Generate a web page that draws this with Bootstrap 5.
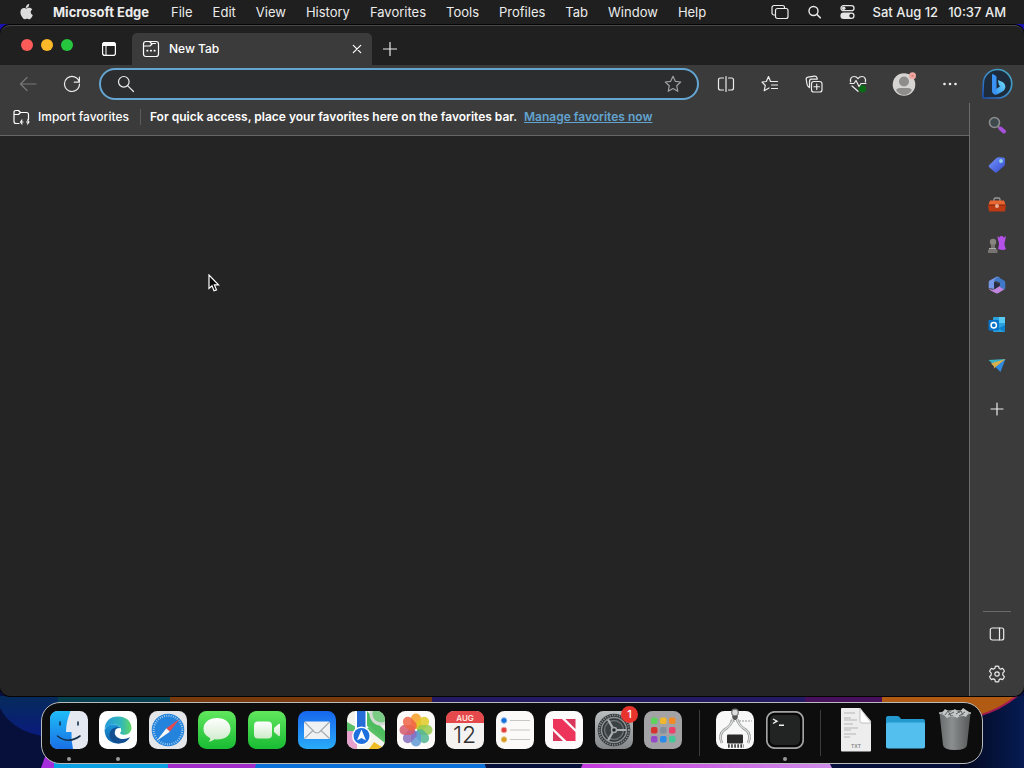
<!DOCTYPE html>
<html lang="en">
<head>
<meta charset="utf-8">
<meta name="viewport" content="width=device-width, initial-scale=1">
<title>New Tab</title>
<link href="https://cdn.jsdelivr.net/npm/bootstrap@5.3.0/dist/css/bootstrap.min.css" rel="stylesheet">
<style>
  body { font-family: Inter, "Liberation Sans", sans-serif; font-size: 13px; line-height: 16px; background: linear-gradient(#1c12b0, #07103a); color: #ececec; }
  a { color: inherit; }
  svg { display: block; flex: none; }
  .line { fill: none; stroke: currentColor; stroke-width: 1.2; stroke-linecap: round; stroke-linejoin: round; }
  .bare { background: none; border: 0; padding: 0; color: inherit; display: flex; align-items: center; justify-content: center; flex: none; }

  .menubar { height: 24px; background: #1f1f1f; padding: 0 18px 0 20px; font-weight: 500; }
  .menubar .menus { gap: 20px; padding: 0 0 1px 20px; }
  .menubar .app-name { font-weight: 700; margin-right: 2px; }
  .status { gap: 18px; }
  .clock { gap: 10px; }

  .browser { position: relative; z-index: 1; margin-top: 1px; border-radius: 10px; background: #202020; border-top: 1px solid #484848; box-shadow: 0 0 0 1px #050505; }
  .tabstrip { height: 39px; }
  .lights { gap: 8px; padding: 0 0 0 21px; margin-bottom: 1px; }
  .light { width: 12px; height: 12px; border-radius: 50%; }
  .red { background: #fc5b57; } .amber { background: #fdb927; } .green { background: #27c63f; }
  .tab-actions { width: 46px; margin-left: 13px; height: 33px; }
  .page-tab { width: 240px; height: 32px; background: #3b3b3b; border-radius: 5px 5px 0 0; padding: 0 9px 0 10px; gap: 9px; font-size: 12px; font-weight: 500; color: #fff; }
  .new-tab { width: 36px; height: 32px; }

  .toolbar { height: 38px; background: #3b3b3b; padding: 0 2px 0 6px; }
  .tool { width: 44px; height: 32px; }
  .tool-back { color: #787878; }
  .tool-star { color: #a0a0a0; }
  .tool-profile { width: 48px; }
  .tool-chat { width: 50px; }
  .address { height: 32px; margin: 0 5px; border: 2px solid #65a5d1; border-radius: 16px; background: #2b2d2f; padding: 0 15px 0 16px; }
  .address input { background: none; border: 0; outline: 0; color: #fff; min-width: 0; padding: 0 10px; }

  .favbar { height: 33px; background: #3b3b3b; border-bottom: 1px solid #666; padding: 0 13px 4px; font-size: 12px; color: #fff; }
  .favbar .rule { width: 1px; height: 16px; background: #5c5c5c; margin: 0 9px 0 11px; }
  .favbar a { color: #62a3cf; font-weight: 600; }
  .notice { font-weight: 600; }
  .page { background: #242424; border-radius: 0 0 0 10px; }
  .sidebar { width: 55px; background: #3b3b3b; border-left: 1px solid #6c6c6c; padding: 2px 0; border-radius: 0 0 10px 0; }
  .side { width: 40px; height: 40px; }
  .side-rule { width: 28px; height: 1px; background: #6a6a6a; margin-bottom: 2px; }
  .pointer { position: absolute; z-index: 2; left: 208px; top: 274px; }

  .desk { height: 72px; position: relative; padding-top: 6px; background: #06143c; }
  .wallpaper { position: absolute; inset: 0; width: 100%; height: 100%; }
  .dock { position: relative; z-index: 2; width: 92%; height: 62px; border: 1px solid #b9bcbc; border-radius: 19px; background: #0d0d0d; padding: 0 2px; }
  .dock-app { flex: 1 1 0; padding: 8px 0 0; position: relative; }
  .running::after { content: ""; position: absolute; left: 50%; top: 54px; width: 4px; height: 4px; margin-left: -2px; border-radius: 50%; background: #9a9a9a; }
  .dock-rule { width: 22px; }
  .dock-rule i { display: block; width: 1px; height: 46px; margin: 7px auto; background: #3c3c3c; }
  .count { position: absolute; left: 50%; top: 3px; margin-left: 7px; width: 17px; height: 17px; line-height: 17px; border-radius: 50%; background: #e8342d; color: #fff; font-size: 11px; font-weight: 500; }
</style>
</head>
<body class="vh-100 d-flex flex-column overflow-hidden">

<header class="menubar d-flex align-items-center flex-shrink-0">
  <svg width="13" height="16" viewBox="0 0 13 16" fill="#ddd"><path d="M9.200 0c.1 1.200-.4 2.200-1 2.900-.6.700-1.500 1.200-2.400 1.100-.1-1.100.4-2.100 1-2.800C7.400.5 8.400 0 9.200 0zM12.300 5.400c-1 .6-1.600 1.500-1.600 2.700 0 1.400.8 2.500 2.100 3-.3 1-.8 1.900-1.400 2.700-.6.800-1.200 1.500-2.100 1.500-.9 0-1.200-.5-2.300-.5s-1.500.5-2.300.5c-.9 0-1.600-.8-2.200-1.700C1.200 11.900.4 10.100.4 8.300c0-2.900 1.800-4.400 3.600-4.400 1 0 1.800.6 2.500.6.600 0 1.600-.7 2.800-.7 1.200 0 2.300.6 3 1.600z"/></svg>
  <nav class="menus d-flex text-nowrap" aria-label="Menu bar">
    <button class="bare app-name">Microsoft Edge</button>
    <button class="bare">File</button><button class="bare">Edit</button><button class="bare">View</button>
    <button class="bare">History</button><button class="bare">Favorites</button><button class="bare">Tools</button>
    <button class="bare">Profiles</button><button class="bare">Tab</button><button class="bare">Window</button><button class="bare">Help</button>
  </nav>
  <div class="status d-flex align-items-center ms-auto text-nowrap">
    <svg class="line" width="18" height="16" viewBox="0 0 18 16"><path d="M3.500 11H3A2 2 0 0 1 1 9V3.500A2 2 0 0 1 3 1.500H11.500A2 2 0 0 1 13.500 3.500"/><rect x="4.500" y="4.500" width="12.500" height="10" rx="2"/></svg>
    <svg class="line" width="15" height="16" viewBox="0 0 15 16"><circle cx="6.500" cy="7" r="4.500" stroke-width="1.400"/><path d="M10 10.500L13.300 13.800" stroke-width="1.600"/></svg>
    <svg width="15" height="16" viewBox="0 0 15 16"><rect x="1" y="1.700" width="13" height="5" rx="2.500" fill="none" stroke="#e4e4e4" stroke-width="1.300"/><circle cx="3.700" cy="4.200" r="1.800" fill="#e4e4e4"/><rect x=".4" y="8.500" width="14.200" height="6.400" rx="3.200" fill="#e4e4e4"/><circle cx="11.300" cy="11.700" r="2" fill="#1f1f1f"/></svg>
    <div class="clock d-flex pb-1 pt-1"><span>Sat Aug 12</span><time>10:37 AM</time></div>
  </div>
</header>

<section class="browser flex-fill d-flex flex-column">
  <div class="tabstrip d-flex align-items-center flex-shrink-0">
    <div class="lights d-flex">
      <button class="bare light red" aria-label="Close window"></button><button class="bare light amber" aria-label="Minimize"></button><button class="bare light green" aria-label="Zoom"></button>
    </div>
    <button class="bare tab-actions align-self-end" aria-label="Tab actions">
      <svg width="14" height="14" viewBox="0 0 14 14"><rect x=".6" y=".6" width="12.800" height="12.800" rx="2.200" fill="none" stroke="#fff" stroke-width="1.200"/><path d="M.6 3.500V2.500Q.6.6 2.500.6H11.500Q13.400.6 13.400 2.500V3.500H.6zM4 4V13.400" fill="#fff" stroke="#fff"/></svg>
    </button>
    <div class="page-tab d-flex align-items-center align-self-end flex-shrink-1">
      <svg class="line" width="18" height="18" viewBox="0 0 18 18"><path d="M1.500 6V4Q1.500 1.500 4 1.500H7.500L9.500 3.500H13.500M8.500 1.500H14Q16.500 1.500 16.500 4V14Q16.500 16.500 14 16.500H4Q1.500 16.500 1.500 14V6H8L10 4"/><path d="M5.200 10.700h.4M8.800 10.700h.4M12.400 10.700h.4" stroke-width="1.700"/></svg>
      <span class="flex-fill text-truncate">New Tab</span>
      <button class="bare" aria-label="Close tab"><svg class="line" width="12" height="12" viewBox="0 0 12 12"><path d="M2.300 2.300L9.700 9.700M9.700 2.300L2.300 9.700"/></svg></button>
    </div>
    <button class="bare new-tab align-self-end" aria-label="New tab"><svg class="line" width="14" height="14" viewBox="0 0 14 14"><path d="M7 .5V13.500M.5 7H13.500"/></svg></button>
  </div>

  <div class="toolbar d-flex align-items-center flex-shrink-0">
    <button class="bare tool tool-back" aria-label="Back"><svg class="line" width="18" height="16" viewBox="0 0 18 16"><path d="M17 8H1.500M8 1.500L1.500 8L8 14.500"/></svg></button>
    <button class="bare tool" aria-label="Reload"><svg class="line" width="18" height="18" viewBox="0 0 18 18"><path d="M16.300 7.200A7.500 7.500 0 1 0 16.500 9M16.400 2V7.200H11.300"/></svg></button>
    <div class="address d-flex align-items-center flex-fill">
      <svg class="line" width="18" height="18" viewBox="0 0 18 18"><circle cx="6.800" cy="6.800" r="5.300"/><path d="M10.800 10.800L16.500 16.500"/></svg>
      <input class="flex-fill" type="text" aria-label="Address and search bar">
      <button class="bare tool-star" aria-label="Add to favorites"><svg class="line" width="18" height="18" viewBox="0 0 18 18"><path d="M9 1.300L11.300 6.300L16.700 7L12.700 10.700L13.800 16.300L9 13.600L4.200 16.300L5.300 10.700L1.300 7L6.700 6.300Z"/></svg></button>
    </div>
    <button class="bare tool" aria-label="Split screen"><svg class="line" width="18" height="18" viewBox="0 0 18 18"><path d="M9 1.500V16.500M6.500 3H3.500Q1.500 3 1.500 5V13Q1.500 15 3.500 15H6.500M11.500 3H14.500Q16.500 3 16.500 5V13Q16.500 15 14.500 15H11.500"/></svg></button>
    <button class="bare tool" aria-label="Favorites"><svg class="line" width="18" height="18" viewBox="0 0 18 18"><path d="M10.700 6.500H9.500L7.500 1.500L5.300 6.500L1 7L4.300 10.500L3.200 15.700L8 13M11 6.500H16.500M10.500 10H16.500M10.500 13.500H16.500"/></svg></button>
    <button class="bare tool" aria-label="Collections"><svg class="line" width="18" height="18" viewBox="0 0 18 18"><rect x="6.500" y="6.500" width="10.500" height="10.500" rx="2.300"/><path d="M11.750 9V14.500M9 11.750H14.500M4.500 12.500L3 11.200Q2.300 10.500 2.100 9.500L1.200 4.500Q.9 2.500 3 2.100L9.500 1.100Q11.500.9 12 2.800L12.300 4M4.500 12.500V6.500Q4.500 4.200 6.300 4.200H12.300"/></svg></button>
    <button class="bare tool" aria-label="Browser essentials"><svg class="line" width="18" height="18" viewBox="0 0 18 18"><circle cx="13.500" cy="13.800" r="3.800" fill="#0b6a15" stroke="none"/><path d="M1.700 7C.7 3.500 2.800 1.500 5 1.500C6.800 1.500 8.200 2.500 9 3.700C9.800 2.500 11.200 1.500 13 1.500C15.500 1.500 17.300 3.900 16.300 7M1 8.500H5L7 5.500L10 11.500L12 8.500H17M3 11L9 16.300"/></svg></button>
    <button class="bare tool tool-profile" aria-label="Profile"><svg width="24" height="24" viewBox="0 0 24 24"><circle cx="12" cy="12.500" r="11.300" fill="#d5d4d2"/><circle cx="12" cy="9.500" r="5" fill="#8f8d8b"/><path d="M4 18Q5 16 8 16H16Q19 16 20 18Q17 23 12 23T4 18Z" fill="#8f8d8b"/><circle cx="20.500" cy="3.800" r="3.500" fill="#efa8a2"/><circle cx="20.500" cy="3.800" r="1.300" fill="#d98782"/></svg></button>
    <button class="bare tool" aria-label="Settings and more"><svg width="14" height="4" viewBox="0 0 14 4" fill="#eee"><circle cx="1.500" cy="2" r="1.300"/><circle cx="7" cy="2" r="1.300"/><circle cx="12.500" cy="2" r="1.300"/></svg></button>
    <button class="bare tool tool-chat" aria-label="Bing Chat"><svg width="32" height="32" viewBox="0 0 32 32"><defs><linearGradient id="ring" x1="1" y1="0" x2="0" y2="1"><stop stop-color="#43a9c4"/><stop offset=".5" stop-color="#3d8fc8"/><stop offset="1" stop-color="#1b4fb8"/></linearGradient><linearGradient id="bing" x1="0" y1="1" x2="1" y2="0"><stop stop-color="#2d86f2"/><stop offset="1" stop-color="#6fe0f7"/></linearGradient></defs><path d="M16.500 1.500A14.200 14.200 0 1 1 16.500 30H3Q1.700 30 1.800 29L2.300 16A14.200 14.200 0 0 1 16.500 1.500Z" fill="#1e2b3a" stroke="url(#ring)" stroke-width="1.600"/><path d="M17 12.500Q16.500 11.800 17.500 12.200L21 13.800Q24.700 15.800 24.300 19.500Q24 22 21.500 23.500L16.500 26.300Q14 27.300 12.300 25.800Q11 24.500 11 22.500L15.500 20.800L19.200 18.300Q18.200 17.800 17.800 16.500Z" fill="url(#bing)"/><path d="M11 6.500Q11 5.800 11.800 6.100L14.700 7.700Q15.500 8.200 15.500 9.200V22Q15.500 25 13.800 25.500Q11 25 11 22.500Z" fill="#3a93f3"/></svg></button>
  </div>

  <div class="d-flex flex-fill">
    <main class="flex-fill d-flex flex-column">
      <div class="favbar d-flex align-items-center text-nowrap">
        <button class="bare fw-medium"><svg class="line me-2" width="17" height="17" viewBox="0 0 17 17"><path d="M6 14.500H3Q1 14.500 1 12.500V3.500Q1 1.500 3 1.500H5.500L7.500 3.500H13.500Q15.500 3.500 15.500 5.500V10.500M1 5.500H5.500L7.500 3.500M9 11L7.500 13L9 15M14.500 11L16 13L14.500 15M7.800 13H10M13.500 13H15.800"/></svg>Import favorites</button>
        <span class="rule"></span>
        <span class="notice">For quick access, place your favorites here on the favorites bar. <a class="ms-1" href="#">Manage favorites now</a></span>
      </div>
      <div class="page flex-fill"></div>
    </main>
    <aside class="sidebar d-flex flex-column align-items-center" aria-label="Sidebar">
      <button class="bare side" aria-label="Search"><svg width="18" height="18" viewBox="0 0 18 18"><circle cx="6.500" cy="6.500" r="5" fill="#3e494e" stroke="#8c8c8c" stroke-width="1.600"/><path d="M10 10.500L12.500 12.500" stroke="#888" stroke-width="2"/><path d="M12.500 12.500L16 15.500" stroke="#a851dc" stroke-width="4" stroke-linecap="round"/></svg></button>
      <button class="bare side" aria-label="Shopping"><svg width="18" height="18" viewBox="0 0 18 18"><defs><linearGradient id="tag" x2="1" y2="1"><stop stop-color="#7597ff"/><stop offset="1" stop-color="#3449cc"/></linearGradient></defs><path d="M1 9.200L8.500 2Q9.300 1.200 10.500 1.200L15.800 1.500Q17 1.700 17 3V7.800Q17 9 16 10L9 16.300Q7.800 17.200 6.700 16L1.200 11.200Q.2 10.200 1 9.200Z" fill="url(#tag)"/><circle cx="13" cy="5" r="1.900" fill="#93d2e6"/></svg></button>
      <button class="bare side" aria-label="Tools"><svg width="18" height="18" viewBox="0 0 18 18"><path d="M6 5V3.500Q6 2 7.500 2H10.500Q12 2 12 3.500V5" fill="none" stroke="#999" stroke-width="1.300"/><path d="M2 4.500H16L18 10H0Z" fill="#e76632"/><path d="M0 9H18L17 15.500H1Z" fill="#bd3b12"/><rect x="0" y="8.500" width="18" height="1" fill="#7e2308"/><circle cx="9" cy="10" r="2" fill="#e6ac93"/></svg></button>
      <button class="bare side" aria-label="Games"><svg width="18" height="18" viewBox="0 0 18 18"><path d="M9.500 0L11.500 1.500L12.500 0H14.500L15.500 1.500L18 0L17 5Q15.500 8 18 13Q16 15 10 13Q12 7 10 4Z" fill="#b451e8"/><circle cx="5" cy="6" r="3.200" fill="#888580"/><path d="M3 8.500H7V12L9.500 14V17H0V14L3 12Z" fill="#777370"/><path d="M1 12.500H8" stroke="#aaa"/></svg></button>
      <button class="bare side" aria-label="Microsoft 365"><svg width="18" height="18" viewBox="0 0 18 18"><path d="M9 .5L1.700 4.500Q.7 5.200.7 6.500V12L6 13V6L12 2Q10.500.2 9 .5Z" fill="#7697e4"/><path d="M.7 12Q1 13.500 3 14.700L8 17.300Q9 17.800 10.500 17L16.500 13.300L12 10L6.500 13.300Q3 14.500.7 12Z" fill="#c285df"/><path d="M10 1L16 4.500Q17.300 5.300 17.300 7V12Q17.300 13 16 13.500L12 11V6.800L6 4.500Q8 1 10 1Z" fill="#3f78c6"/><path d="M6 6L12 9L6.500 13Z" fill="#242c48"/></svg></button>
      <button class="bare side" aria-label="Outlook"><svg width="18" height="18" viewBox="0 0 18 18"><rect x="5" y="1" width="12" height="15" rx="1" fill="#2ba2de"/><path d="M11 1H17V7H11Z" fill="#58cbf5"/><path d="M5 10L17 16V9L11 12Z" fill="#0e81ca"/><rect x=".5" y="4" width="10.500" height="10.500" rx="1" fill="#0874c9"/><circle cx="5.750" cy="9.200" r="2.700" fill="none" stroke="#fff" stroke-width="1.500"/></svg></button>
      <button class="bare side" aria-label="Drop"><svg width="18" height="18" viewBox="0 0 18 18"><path d="M.5 4L17.500 3L7 10Z" fill="#3bb2c5"/><path d="M17.500 3L12.500 16L6.500 10Z" fill="#3089dd"/><path d="M17.500 3L3 7.500L6 10.500V12.500L8.500 10.300Z" fill="#d9b04a"/></svg></button>
      <button class="bare side mt-1" aria-label="Customize"><svg class="line" width="14" height="14" viewBox="0 0 14 14"><path d="M7 1V13M1 7H13"/></svg></button>
      <span class="side-rule mt-auto"></span>
      <button class="bare side" aria-label="Hide sidebar"><svg class="line" width="16" height="14" viewBox="0 0 16 14"><rect x="1.300" y="1" width="13.400" height="12" rx="2"/><path d="M10.500 1.200V12.800"/></svg></button>
      <button class="bare side" aria-label="Settings"><svg class="line" width="18" height="18" viewBox="0 0 18 18"><circle cx="9" cy="9" r="2.200"/><path d="M7.300 1.300Q9 .8 10.700 1.300L11.100 3.300Q11.800 3.900 12.700 4.100L14.600 3.400Q15.900 4.700 16.400 6.400L14.900 7.900Q14.600 9 14.900 10.100L16.400 11.600Q15.900 13.300 14.600 14.600L12.700 13.900Q11.800 14.100 11.100 14.700L10.700 16.700Q9 17.200 7.300 16.700L6.900 14.700Q6.200 14.100 5.300 13.900L3.400 14.600Q2.100 13.300 1.600 11.600L3.100 10.100Q3.400 9 3.100 7.900L1.600 6.400Q2.100 4.700 3.400 3.400L5.300 4.100Q6.200 3.900 6.900 3.300Z"/></svg></button>
    </aside>
  </div>
</section>

<footer class="desk flex-shrink-0">
  <svg class="wallpaper" viewBox="0 0 1024 72" preserveAspectRatio="none">
    <defs><linearGradient id="glow" x2="0" y2="1"><stop stop-color="#062b5b"/><stop offset="1" stop-color="#0a1a80"/></linearGradient><linearGradient id="pink"><stop stop-color="#c43ade"/><stop offset="1" stop-color="#cf8de8"/></linearGradient><linearGradient id="night"><stop stop-color="#03081e"/><stop offset="1" stop-color="#061b52"/></linearGradient></defs>
    <rect width="1024" height="72" fill="#07103a"/>
    <path d="M0 0H60V42Q14 40 0 12Z" fill="url(#glow)"/>
    <path d="M58 0H170V20H58Z" fill="#07414f"/><path d="M170 0H432V20H170Z" fill="#793a0d"/><path d="M432 0H805V20H432Z" fill="#231a63"/><path d="M805 0H882V20H805Z" fill="#47105c"/>
    <path d="M960 0H1024V72H960Z" fill="url(#night)"/><path d="M882 0H1017Q1000 14 978 20H882Z" fill="#b05a13"/><path d="M1017 0Q1000 14 978 20" fill="none" stroke="#a21b55" stroke-width="2"/>
    <path d="M41 72L46 58H60V72Z" fill="#a62ddc"/><path d="M54 60H168V72H54Z" fill="#0aa0e2"/><path d="M168 60H258V72H168Z" fill="#a22bc9"/><path d="M258 60H482L486 72H255Z" fill="#0b71d8"/><path d="M586 60H826L832 72H581Z" fill="url(#pink)"/>
  </svg>
  <nav class="dock d-flex mx-auto" aria-label="Dock">
    <button class="bare dock-app align-items-start running" aria-label="Finder"><svg width="38" height="38" viewBox="0 0 38 38"><defs><linearGradient id="fin" x2="0" y2="1"><stop stop-color="#1fbdf7"/><stop offset="1" stop-color="#196fe5"/></linearGradient></defs><rect width="38" height="38" rx="8.500" fill="#e4e8f0"/><path d="M8.500 0H20.500Q16 11 16 21H21.500Q21 29 23 38H8.500Q0 38 0 29.500V8.500Q0 0 8.500 0Z" fill="url(#fin)"/><path d="M10 11V14M28 11V14M7.500 25Q18 33.500 30 25" fill="none" stroke="#16314c" stroke-width="1.600" stroke-linecap="round"/></svg></button>
    <button class="bare dock-app align-items-start running" aria-label="Microsoft Edge"><svg width="38" height="38" viewBox="0 0 38 38"><defs><linearGradient id="ed1"><stop stop-color="#2598dc"/><stop offset=".6" stop-color="#31b7bb"/><stop offset="1" stop-color="#61d764"/></linearGradient><linearGradient id="ed2" y2="1" x2="0"><stop stop-color="#1b98db"/><stop offset="1" stop-color="#1160a8"/></linearGradient></defs><rect width="38" height="38" rx="8.500" fill="#fff"/><path d="M5.500 18Q7 5.500 19 5.500Q32 6 32.500 17.500Q31.500 24 24.500 23.800Q20.500 23.500 21.300 21.500Q23 20 21.800 17.500Q19 12.500 12 13.500Q7.500 14.500 5.500 18Z" fill="url(#ed1)"/><path d="M5.500 19Q8 13 14 13.300Q19.500 13.500 21.500 17Q15 17 14.700 22Q15 31 26 29Q29 28 31 26.300Q27 32.500 19 32.500Q6.500 32 5.500 19Z" fill="url(#ed2)"/><path d="M14 17.500Q10 20 10.500 25.500Q12.500 31.500 19.500 32.500Q27 32.500 31 26.300Q26 29 20.500 27.500Q14 25 16.500 18.500Q17 17 21 16.600Q17 15.700 14 17.500Z" fill="#144f91"/></svg></button>
    <button class="bare dock-app align-items-start" aria-label="Safari"><svg width="38" height="38" viewBox="0 0 38 38"><rect width="38" height="38" rx="8.500" fill="#e5e6e9"/><circle cx="19" cy="19" r="16.300" fill="#2483dc"/><circle cx="19" cy="19" r="14.300" fill="none" stroke="#b8d8ef" stroke-width="2" stroke-dasharray=".8 1.450"/><path d="M30.500 8L17.300 17.200L20.800 20.800Z" fill="#e44a50"/><path d="M7.500 30L17.300 17.200L20.800 20.800Z" fill="#f6f7f8"/></svg></button>
    <button class="bare dock-app align-items-start" aria-label="Messages"><svg width="38" height="38" viewBox="0 0 38 38"><defs><linearGradient id="grn" x2="0" y2="1"><stop stop-color="#61e75e"/><stop offset="1" stop-color="#18bc33"/></linearGradient><linearGradient id="sil" x2="0" y2="1"><stop stop-color="#fff"/><stop offset="1" stop-color="#ceebca"/></linearGradient></defs><rect width="38" height="38" rx="8.500" fill="url(#grn)"/><path d="M19 7C27 7 32.500 11.500 32.500 18S27 28.500 19 28.500L16.500 28.300Q14 30.500 10.500 30.800Q12.500 29 12.300 27.200Q5.500 24 5.500 18C5.500 11.500 11 7 19 7Z" fill="url(#sil)"/></svg></button>
    <button class="bare dock-app align-items-start" aria-label="FaceTime"><svg width="38" height="38" viewBox="0 0 38 38"><rect width="38" height="38" rx="8.500" fill="url(#grn)"/><rect x="6" y="10.500" width="18" height="17" rx="4" fill="url(#sil)"/><path d="M26 17L30 13.500Q32 12 32 14V24Q32 26 30 24.500L26 21Z" fill="url(#sil)"/></svg></button>
    <button class="bare dock-app align-items-start" aria-label="Mail"><svg width="38" height="38" viewBox="0 0 38 38"><defs><linearGradient id="mai" x2="0" y2="1"><stop stop-color="#1767ee"/><stop offset="1" stop-color="#29abf8"/></linearGradient></defs><rect width="38" height="38" rx="8.500" fill="url(#mai)"/><rect x="6" y="10.500" width="26" height="17.500" rx="1.500" fill="#eff1f2"/><path d="M6.500 11L16.500 21Q19 23 21.500 21L31.500 11M6.500 27.500L15 19.500M31.500 27.500L23 19.500" fill="none" stroke="#a2abb2" stroke-width="1.100"/></svg></button>
    <button class="bare dock-app align-items-start" aria-label="Maps"><svg width="38" height="38" viewBox="0 0 38 38"><defs><clipPath id="rnd"><rect width="38" height="38" rx="8.500"/></clipPath></defs><g clip-path="url(#rnd)"><rect width="38" height="38" fill="#f3f4ed"/><path d="M20 0L38 20V31L17 12V0Z" fill="#4ebd60"/><path d="M0 11L9 16V25H0Z" fill="#58c066"/><circle cx="34" cy="3" r="10" fill="#7bcc84" stroke="#d4dad4" stroke-width="3"/><path d="M0 20H10V38H0Z" fill="#e7a1cd"/><path d="M22 38L27 31L38 38Z" fill="#efbd24"/><path d="M23 15L38 28V32L20 18Z" fill="#58c066"/><rect x="8" y="0" width="12" height="20" fill="#fff"/><rect x="10" width="8.500" height="20" fill="#266dd7"/><circle cx="14.500" cy="25" r="9.500" fill="#fff"/><circle cx="14.500" cy="25" r="8" fill="#1d70de"/><path d="M14.500 18.500L19 29.500L14.500 27L10 29.500Z" fill="#fff"/></g></svg></button>
    <button class="bare dock-app align-items-start" aria-label="Photos"><svg width="38" height="38" viewBox="0 0 38 38"><rect width="38" height="38" rx="8.500" fill="#fcfbf9"/><g fill-opacity=".85"><rect x="14" y="2.500" width="10" height="15.500" rx="5" fill="#f79e25"/><rect x="14" y="2.500" width="10" height="15.500" rx="5" fill="#e0c926" transform="rotate(45 19 19)"/><rect x="14" y="2.500" width="10" height="15.500" rx="5" fill="#96c94d" transform="rotate(90 19 19)"/><rect x="14" y="2.500" width="10" height="15.500" rx="5" fill="#52b694" transform="rotate(135 19 19)"/><rect x="14" y="2.500" width="10" height="15.500" rx="5" fill="#609ad5" transform="rotate(180 19 19)"/><rect x="14" y="2.500" width="10" height="15.500" rx="5" fill="#876fc0" transform="rotate(225 19 19)"/><rect x="14" y="2.500" width="10" height="15.500" rx="5" fill="#d4586f" transform="rotate(270 19 19)"/><rect x="14" y="2.500" width="10" height="15.500" rx="5" fill="#ee6445" transform="rotate(315 19 19)"/></g></svg></button>
    <button class="bare dock-app align-items-start" aria-label="Calendar"><svg width="38" height="38" viewBox="0 0 38 38" text-anchor="middle" font-family="Inter, sans-serif"><rect width="38" height="38" rx="8.500" fill="#f5f3f1"/><path d="M0 12V8.500Q0 0 8.500 0H29.500Q38 0 38 8.500V12Z" fill="#e6494b"/><text x="19" y="9.500" font-size="8" font-weight="600" fill="#ffe3df">AUG</text><text x="18.500" y="32" font-size="23" font-weight="300" fill="#303030">12</text></svg></button>
    <button class="bare dock-app align-items-start" aria-label="Reminders"><svg width="38" height="38" viewBox="0 0 38 38"><rect width="38" height="38" rx="8.500" fill="#fbfaf8"/><path d="M14 9.500H34M14 19H34M14 28.500H34" stroke="#c6c6c5"/><g stroke-width="1"><circle cx="8" cy="9.500" r="2.800" fill="#1570da" stroke="#84b3eb"/><circle cx="8" cy="19" r="2.800" fill="#e23e37" stroke="#efa29c"/><circle cx="8" cy="28.500" r="2.800" fill="#d99a1a" stroke="#e5cc8d"/></g></svg></button>
    <button class="bare dock-app align-items-start" aria-label="News"><svg width="38" height="38" viewBox="0 0 38 38"><rect width="38" height="38" rx="8.500" fill="#fcfafa"/><path d="M8 8H17L30.500 21V30H21.500L8 17Z" fill="#ed355b"/><path d="M20.500 8H30.500V18ZM8 20L18 30H8Z" fill="#d8365b"/></svg></button>
    <button class="bare dock-app align-items-start" aria-label="System Preferences, 1 update"><svg width="38" height="38" viewBox="0 0 38 38"><defs><linearGradient id="pre" x2="0" y2="1"><stop stop-color="#b9bdbe"/><stop offset="1" stop-color="#85898b"/></linearGradient></defs><rect width="38" height="38" rx="8.500" fill="url(#pre)"/><circle cx="19" cy="19" r="16.300" fill="#303538"/><circle cx="19" cy="19" r="14.800" fill="none" stroke="#8d9294" stroke-width="1.800" stroke-dasharray="1.200 1.200"/><circle cx="19" cy="19" r="12.500" fill="none" stroke="#8c9192" stroke-width="1.500"/><circle cx="19" cy="19" r="9.500" fill="#3b4143" stroke="#6a7072" stroke-width="1.500"/><path d="M19 19H31M19 19L13 8.600M19 19L13 29.400" stroke="#a9aeaf" stroke-width="2.200"/><circle cx="19" cy="19" r="2.500" fill="#222729" stroke="#a2a7a8" stroke-width="1.500"/></svg><span class="count">1</span></button>
    <button class="bare dock-app align-items-start" aria-label="Launchpad"><svg width="38" height="38" viewBox="0 0 38 38"><rect width="38" height="38" rx="8.500" fill="#a3a2a5"/><g><rect x="7" y="6.500" width="6.500" height="6.500" rx="1.800" fill="#5ed35c"/><rect x="16" y="6.500" width="6.500" height="6.500" rx="1.800" fill="#f0b72d"/><rect x="25" y="6.500" width="6.500" height="6.500" rx="1.800" fill="#f28a28"/><rect x="7" y="16" width="6.500" height="6.500" rx="1.800" fill="#d8342f"/><rect x="16" y="16" width="6.500" height="6.500" rx="1.800" fill="#84919d"/><rect x="25" y="16" width="6.500" height="6.500" rx="1.800" fill="#ec416d"/><rect x="7" y="25" width="6.500" height="6.500" rx="1.800" fill="#954ac8"/><rect x="16" y="25" width="6.500" height="6.500" rx="1.800" fill="#298ce8"/><rect x="25" y="25" width="6.500" height="6.500" rx="1.800" fill="#45c898"/></g></svg></button>
    <div class="dock-rule"><i></i></div>
    <button class="bare dock-app align-items-start" aria-label="System Information"><svg width="38" height="38" viewBox="0 0 38 38" overflow="visible"><rect width="38" height="38" rx="8.500" fill="#f8f8f8"/><path d="M14 10H36" stroke="#999" stroke-width="1" stroke-dasharray="2 1"/><circle cx="19" cy="1.500" r="3.300" fill="#ddd" stroke="#777" stroke-width="1.200"/><path d="M16 5H22L21 9H17Z" fill="#555"/><path d="M17 8Q15 15 8 19Q2 24 6 32M21 8Q23 15 30 19Q36 24 32 32" fill="none" stroke="#8d9090" stroke-width="2.600"/><path d="M17 8Q15 15 8 19Q2 24 6 32M21 8Q23 15 30 19Q36 24 32 32" fill="none" stroke="#dfe0df" stroke-width="1.200"/><rect x="11" y="23.500" width="16" height="9" rx="1" fill="#292929"/><path d="M12 35H28" stroke="#444" stroke-width="3.500" stroke-dasharray="1.700 1.400"/></svg></button>
    <button class="bare dock-app align-items-start running" aria-label="Terminal"><svg width="38" height="38" viewBox="0 0 38 38"><rect x=".8" y=".8" width="36.400" height="36.400" rx="8" fill="#070707" stroke="#a3a3a3" stroke-width="1.700"/><rect x="4" y="4" width="30" height="30" rx="5" fill="#222424"/><path d="M7 8L11 10.200L7 12.500M13 14.300H18" fill="none" stroke="#f0f0f0" stroke-width="1.400"/></svg></button>
    <div class="dock-rule"><i></i></div>
    <button class="bare dock-app align-items-start" aria-label="Text document"><svg width="38" height="38" viewBox="0 0 38 38" overflow="visible"><path d="M4 -2.500Q4 -3 5 -3H23L34 10V39.500Q34 40.500 33 40.500H5Q4 40.500 4 39.500Z" fill="#ededed"/><path d="M23 -3V10Q23 12 25 12H34Z" fill="#fff" stroke="#aaa" stroke-width=".7"/><path d="M7 2H18M7 7H14M7 9H20M7 13H16M7 17H21M7 19H14M7 23H19M7 26H13" stroke="#b4b4b4" stroke-width="1"/><text x="19" y="37" text-anchor="middle" font-family="Inter, sans-serif" font-size="5" font-weight="500" fill="#777">TXT</text></svg></button>
    <button class="bare dock-app align-items-start" aria-label="Downloads"><svg width="39" height="38" viewBox="0 0 39 38"><path d="M0 7Q0 5 2 5H11Q12.500 5 13.500 6L15 8H37Q39 8 39 10V35Q39 37 37 37H2Q0 37 0 35Z" fill="#2499cf"/><path d="M0 13Q0 11.500 2 11.500H37Q39 11.500 39 13V35.500Q39 37.500 37 37.500H2Q0 37.500 0 35.500Z" fill="#53bfee"/></svg></button>
    <button class="bare dock-app align-items-start" aria-label="Trash"><svg width="38" height="38" viewBox="0 0 38 38" overflow="visible"><defs><linearGradient id="can"><stop stop-color="#777b7b"/><stop offset=".4" stop-color="#a3a6a6"/><stop offset="1" stop-color="#626565"/></linearGradient></defs><path d="M3.500 2H34.500L31 34Q30.500 39 19 39T7 34Z" fill="url(#can)" fill-opacity=".85"/><path d="M3 2Q19 9 35 2Q19 -3 3 2Z" fill="#505454" stroke="#b5b8b8"/><path d="M6 2L9 -2L14 1L19 -2L23 2L27 -3L33 1L30 6L25 4L21 7L16 4L11 7Z" fill="#c4c7c7"/><path d="M9 4L12 0L15 5M20 3L25 0L27 4M12 4L18 1M23 5L29 1" fill="none" stroke="#5c6060"/></svg></button>
  </nav>
</footer>

<svg class="pointer" width="12" height="19" viewBox="0 0 12 19"><path d="M1 1V14.500L4 11.800L6 16.800L8.500 15.800L6.400 10.900H10.500Z" fill="#080808" stroke="#fff" stroke-width="1.200"/></svg>

<script src="https://cdn.jsdelivr.net/npm/bootstrap@5.3.0/dist/js/bootstrap.bundle.min.js"></script>
</body>
</html>
